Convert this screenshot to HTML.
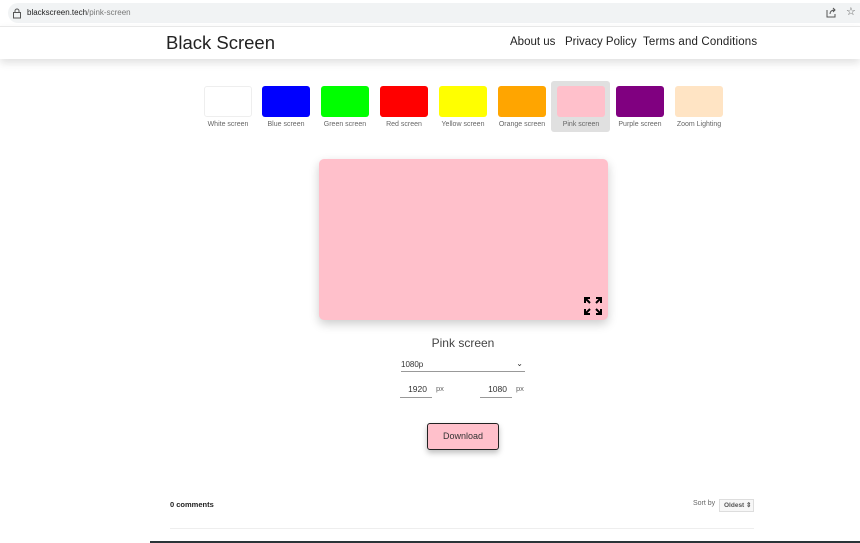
<!DOCTYPE html>
<html><head><meta charset="utf-8"><style>
*{margin:0;padding:0;box-sizing:border-box}
body{width:860px;height:543px;overflow:hidden;background:#fff;font-family:"Liberation Sans",sans-serif;position:relative;color:#333}
.abs{position:absolute}
.bar{left:0;top:0;width:860px;height:26px;background:#fff}
.url{left:8px;top:3px;width:852px;height:20px;background:#f1f3f4;border-radius:10px 0 0 10px}
.hdr{left:0;top:26px;width:860px;height:33px;background:#fff;box-shadow:0 4px 8px rgba(0,0,0,.12);border-top:1px solid #e8e8e8}
.sw{width:48px;height:31px;border-radius:3px;top:86px}
.lb{top:121px;font-size:7px;color:#666;width:60px;text-align:center}
.nav{top:36px;font-size:11.5px;color:#222;white-space:nowrap}
</style></head><body>
<div class="abs bar"></div>
<div class="abs url"></div>
<svg class="abs" style="left:12px;top:8px" width="10" height="11" viewBox="0 0 10 11"><rect x="1.5" y="4.5" width="7" height="5.5" fill="none" stroke="#555" stroke-width="1"/><path d="M3 4.5V3a2 2 0 0 1 4 0v1.5" fill="none" stroke="#555"/></svg>
<div class="abs" style="left:27px;top:8px;font-size:8px;color:#222">blackscreen.tech<span style="color:#777">/pink-screen</span></div>
<svg class="abs" style="left:826px;top:7px" width="11" height="11" viewBox="0 0 11 11"><path d="M1 3v7h8V7M4 7c0-3 2-4 5-4M7 1l2 2-2 2" fill="none" stroke="#555"/></svg>
<div class="abs" style="left:846px;top:5px;font-size:11px;color:#555">☆</div>
<div class="abs hdr"></div>
<div class="abs" style="left:166px;top:32px;font-size:18.5px;color:#222">Black Screen</div>
<div class="abs nav" style="left:510px">About us</div>
<div class="abs nav" style="left:565px">Privacy Policy</div>
<div class="abs nav" style="left:643px;letter-spacing:.15px">Terms and Conditions</div>

<div class="abs" style="left:551px;top:81px;width:59px;height:51px;background:#e0e0e0;border-radius:3px"></div>
<div class="abs sw" style="left:204px;background:#fff;border:1px solid #eee"></div>
<div class="abs sw" style="left:262px;background:#00f"></div>
<div class="abs sw" style="left:321px;background:#0f0"></div>
<div class="abs sw" style="left:380px;background:#f00"></div>
<div class="abs sw" style="left:439px;background:#ff0"></div>
<div class="abs sw" style="left:498px;background:#ffa500"></div>
<div class="abs sw" style="left:557px;background:#ffc0cb"></div>
<div class="abs sw" style="left:616px;background:#800080"></div>
<div class="abs sw" style="left:675px;background:#ffe4c4"></div>
<div class="abs lb" style="left:198px">White screen</div>
<div class="abs lb" style="left:256px">Blue screen</div>
<div class="abs lb" style="left:315px">Green screen</div>
<div class="abs lb" style="left:374px">Red screen</div>
<div class="abs lb" style="left:433px">Yellow screen</div>
<div class="abs lb" style="left:492px">Orange screen</div>
<div class="abs lb" style="left:551px">Pink screen</div>
<div class="abs lb" style="left:610px">Purple screen</div>
<div class="abs lb" style="left:669px">Zoom Lighting</div>

<div class="abs" style="left:319px;top:159px;width:289px;height:161px;background:#ffc0cb;border-radius:5px;box-shadow:0 4px 10px rgba(0,0,0,.2)"></div>
<svg class="abs" style="left:584px;top:297px" width="18" height="18" viewBox="0 0 18 18" stroke="#000" stroke-width="2" fill="none"><path d="M1 6V1h5M1 1l5 5M12 1h5v5M17 1l-5 5M1 12v5h5M1 17l5-5M17 12v5h-5M17 17l-5-5"/></svg>

<div class="abs" style="left:363px;top:336px;width:200px;text-align:center;font-size:12px;color:#444">Pink screen</div>
<div class="abs" style="left:401px;top:360px;width:124px;height:12px;border-bottom:1px solid #999;font-size:8px;color:#333">1080p<span style="position:absolute;right:2px;top:-1px;font-size:8px">⌄</span></div>
<div class="abs" style="left:400px;top:384px;width:32px;height:14px;border-bottom:1px solid #999;font-size:8.5px;text-align:right;padding-right:5px;color:#333">1920</div>
<div class="abs" style="left:436px;top:384px;font-size:7.5px;color:#666">px</div>
<div class="abs" style="left:480px;top:384px;width:32px;height:14px;border-bottom:1px solid #999;font-size:8.5px;text-align:right;padding-right:5px;color:#333">1080</div>
<div class="abs" style="left:516px;top:384px;font-size:7.5px;color:#666">px</div>
<div class="abs" style="left:427px;top:423px;width:72px;height:27px;background:#ffc0cb;border:1.5px solid #222;border-radius:3px;box-shadow:0 3px 6px rgba(0,0,0,.25);font-size:9px;text-align:center;line-height:24px;color:#333">Download</div>

<div class="abs" style="left:170px;top:500px;font-size:7.5px;font-weight:bold;color:#222">0 comments</div>
<div class="abs" style="left:693px;top:500px;font-size:7px;color:#666">Sort by</div>
<div class="abs" style="left:719px;top:499px;width:35px;height:13px;border:1px solid #ddd;background:#f7f7f7;font-size:6.5px;font-weight:bold;color:#555;line-height:11px;padding-left:4px">Oldest ⇕</div>
<div class="abs" style="left:170px;top:528px;width:584px;height:1px;background:#eee"></div>
<div class="abs" style="left:150px;top:541px;width:710px;height:2px;background:#2a3438"></div>
</body></html>
